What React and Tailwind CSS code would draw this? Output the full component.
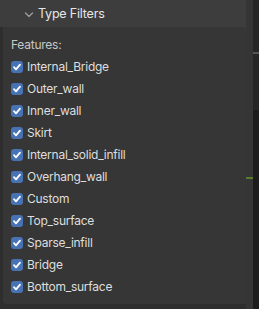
const FEATURES = [
  "Internal_Bridge",
  "Outer_wall",
  "Inner_wall",
  "Skirt",
  "Internal_solid_infill",
  "Overhang_wall",
  "Custom",
  "Top_surface",
  "Sparse_infill",
  "Bridge",
  "Bottom_surface",
];

const Check = () => (
  <span className="w-[12px] h-[12px] rounded-[3px] bg-[#4772b3] flex items-center justify-center shrink-0">
    <svg width="10" height="10" viewBox="0 0 10 10" fill="none" stroke="#ffffff" strokeWidth="1.8" strokeLinecap="round" strokeLinejoin="round">
      <polyline points="2,5.2 4,7.3 8,2.6" />
    </svg>
  </span>
);

export default function App() {
  return (
    <div className="w-[259px] h-[309px] flex bg-[#2e2e2e] overflow-hidden" style={{ fontFamily: "Inter, 'DejaVu Sans', sans-serif" }}>
      {/* -- Panel -- */}
      <div className="w-[246px] flex flex-col">
        <div className="h-[27px] bg-[#3d3d3d] flex items-center pl-[24px] gap-[4px] pt-[2px] text-[12.5px] tracking-[-0.2px] text-[#e6e6e6]">
          <svg width="10" height="8" viewBox="0 0 10 8" fill="none" stroke="#9a9a9a" strokeWidth="1.4" strokeLinecap="round" strokeLinejoin="round">
            <polyline points="1.5,2 5,5.5 8.5,2" />
          </svg>
          <span>Type Filters</span>
        </div>
        <div className="flex ml-[3px] h-[277px] bg-[#363636] rounded-bl-[4px] flex-col pl-[8px] pt-[10px] text-[12px] tracking-[-0.25px] text-[#dedede]">
          <div className="h-[16px] flex items-center text-[#c8c8c8]">Features:</div>
          <div className="flex flex-col mt-[3px]">
            {FEATURES.map((f) => (
              <div key={f} className="h-[22px] flex items-center gap-[4px]">
                <Check />
                <span>{f}</span>
              </div>
            ))}
          </div>
        </div>
      </div>

      {/* -- Right edge -- */}
      <div className="w-[7px] bg-[#353535] relative">
        <div className="absolute left-0 top-[177px] w-[7px] h-[2px] bg-[#5a7a2e]" />
      </div>
      <div className="w-[6px] bg-[#1c1c1c] flex flex-col">
        <div className="h-[52px] bg-[#262626]" />
        <div className="h-[2px] bg-[#555555]" />
        <div className="h-[56px] bg-[#262626]" />
      </div>
    </div>
  );
}
